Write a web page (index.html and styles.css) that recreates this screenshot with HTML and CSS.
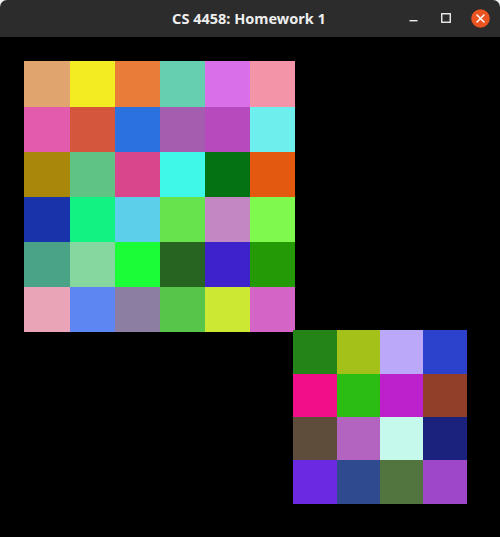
FILE: index.html
```html
<!DOCTYPE html>
<html>
<head>
<meta charset="utf-8">
<link rel="stylesheet" href="styles.css">
</head>
<body>
<div class="window">
  <header class="titlebar">
    <span class="title">CS 4458: Homework 1</span>
    <div class="controls">
      <span class="btn min"><svg width="10" height="10" viewBox="0 0 10 10"><rect x="0.5" y="6" width="8" height="1.4" fill="#eeeeee"/></svg></span>
      <span class="btn max"><svg width="10" height="10" viewBox="0 0 10 10"><rect x="0.75" y="0.75" width="8.5" height="8.5" fill="none" stroke="#eeeeee" stroke-width="1.4"/></svg></span>
      <span class="btn close"><svg width="19" height="19" viewBox="0 0 19 19"><circle cx="9.5" cy="9.5" r="9.3" fill="#e95420"/><path d="M6 6 L13 13 M13 6 L6 13" stroke="#ffffff" stroke-width="1.5" stroke-linecap="round"/></svg></span>
    </div>
  </header>
  <main class="canvas">
    <div class="grid big">
      <div style="background:#e0a46f"></div><div style="background:#f3ec22"></div><div style="background:#e87c38"></div><div style="background:#66cfb0"></div><div style="background:#d970ea"></div><div style="background:#f394a8"></div>
      <div style="background:#e25bad"></div><div style="background:#d3563d"></div><div style="background:#2b72e0"></div><div style="background:#a55db0"></div><div style="background:#b74bbd"></div><div style="background:#6eeeed"></div>
      <div style="background:#a8870b"></div><div style="background:#5fc386"></div><div style="background:#d9468c"></div><div style="background:#3ff8e8"></div><div style="background:#047212"></div><div style="background:#e2590f"></div>
      <div style="background:#1934ab"></div><div style="background:#12f283"></div><div style="background:#5ccfea"></div><div style="background:#67e34d"></div><div style="background:#c388c4"></div><div style="background:#7ff94d"></div>
      <div style="background:#4aa287"></div><div style="background:#86d79f"></div><div style="background:#1bfe37"></div><div style="background:#286421"></div><div style="background:#3e22cc"></div><div style="background:#249a06"></div>
      <div style="background:#e9a4b7"></div><div style="background:#5e86f2"></div><div style="background:#8c7ea2"></div><div style="background:#57c54a"></div><div style="background:#cde833"></div><div style="background:#d465c7"></div>
    </div>
    <div class="grid small">
      <div style="background:#248417"></div><div style="background:#a4c11a"></div><div style="background:#bca8f8"></div><div style="background:#2c41cc"></div>
      <div style="background:#f20d89"></div><div style="background:#2bbd14"></div><div style="background:#bd21cb"></div><div style="background:#923f29"></div>
      <div style="background:#5f4d3c"></div><div style="background:#b264c0"></div><div style="background:#c4f9ec"></div><div style="background:#1a227d"></div>
      <div style="background:#6b2ae2"></div><div style="background:#2f4a8e"></div><div style="background:#52743e"></div><div style="background:#9e48c9"></div>
    </div>
  </main>
</div>
</body>
</html>
```
FILE: styles.css
```css
html, body {
  margin: 0;
  padding: 0;
  width: 500px;
  height: 537px;
  background: #f2f2f2;
  overflow: hidden;
}
.window {
  display: flex;
  flex-direction: column;
  width: 500px;
  height: 537px;
}
.titlebar {
  position: relative;
  height: 37px;
  flex: 0 0 37px;
  background: #2c2c2c;
  border-radius: 7px 7px 0 0;
  display: flex;
  align-items: center;
  justify-content: center;
}
.title {
  font-family: "Noto Sans", "DejaVu Sans", sans-serif;
  font-weight: 700;
  font-size: 14.5px;
  color: #eeeeee;
  line-height: 37px;
  margin-left: -2px;
}
.controls {
  position: absolute;
  right: 10px;
  top: 0;
  height: 37px;
  display: flex;
  align-items: center;
}
.btn {
  display: flex;
  align-items: center;
  justify-content: center;
}
.btn.min { width: 10px; height: 10px; margin-right: 22px; }
.btn.max { width: 10px; height: 10px; margin-right: 20px; margin-top: -1px; }
.btn.close { width: 19px; height: 19px; }
.canvas {
  flex: 1;
  background: #000000;
  padding: 24px;
  display: flex;
  flex-direction: column;
  align-items: flex-start;
}
.grid {
  display: grid;
}
.big {
  grid-template-columns: 46px 45px 45px 45px 45px 45px;
  grid-template-rows: 46px 45px 45px 45px 45px 45px;
}
.small {
  margin-left: 269px;
  margin-top: -2px;
  grid-template-columns: 44px 43px 43px 44px;
  grid-template-rows: 44px 43px 43px 44px;
}
```
